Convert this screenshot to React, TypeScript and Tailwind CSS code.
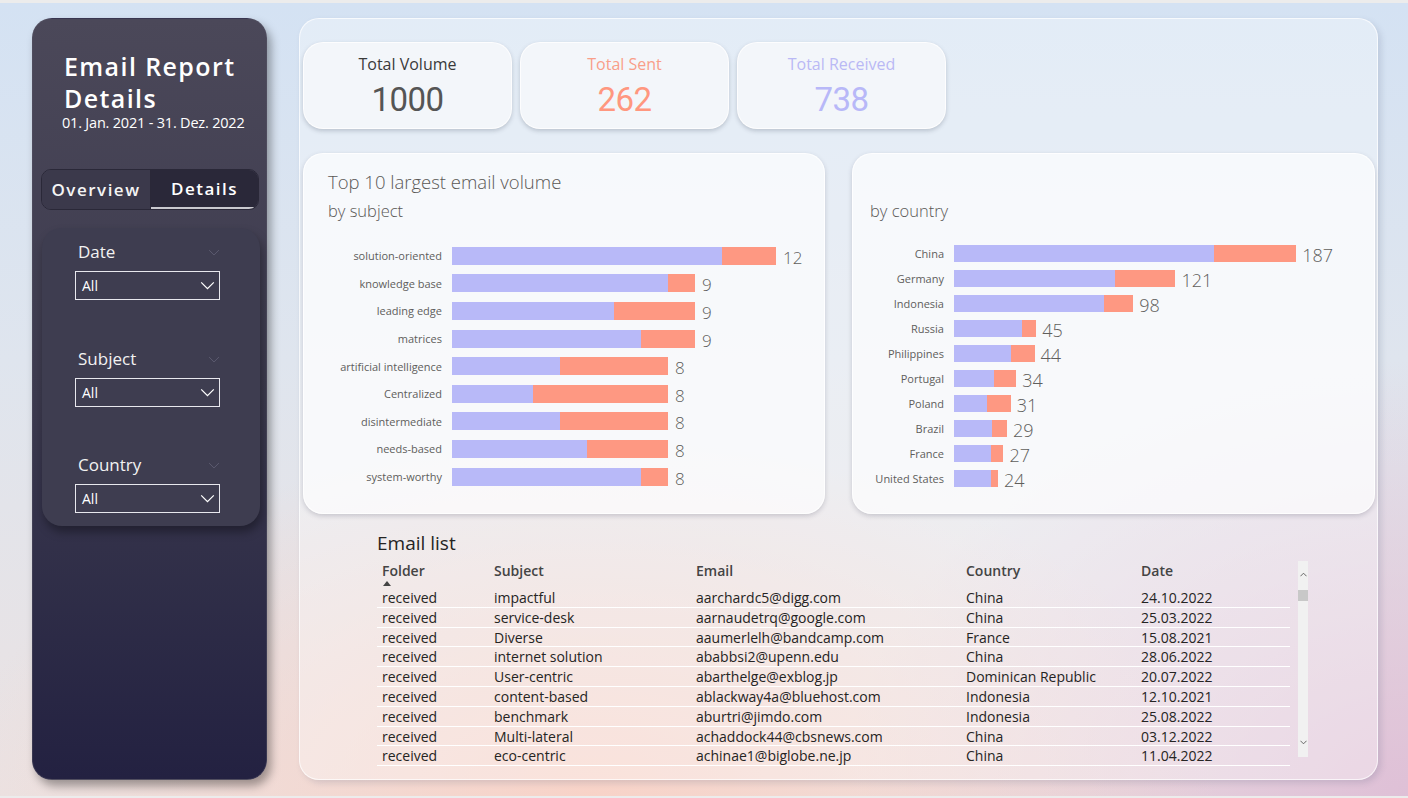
import React from "react";

const subjects: [string, number, number][] = [
  ["solution-oriented", 10, 2],
  ["knowledge base", 8, 1],
  ["leading edge", 6, 3],
  ["matrices", 7, 2],
  ["artificial intelligence", 4, 4],
  ["Centralized", 3, 5],
  ["disintermediate", 4, 4],
  ["needs-based", 5, 3],
  ["system-worthy", 7, 1],
];

const countries: [string, number, number][] = [
  ["China", 142, 45],
  ["Germany", 88, 33],
  ["Indonesia", 82, 16],
  ["Russia", 37, 8],
  ["Philippines", 31, 13],
  ["Portugal", 22, 12],
  ["Poland", 18, 13],
  ["Brazil", 21, 8],
  ["France", 20, 7],
  ["United States", 20, 4],
];

const emails: [string, string, string, string, string][] = [
  ["received", "impactful", "aarchardc5@digg.com", "China", "24.10.2022"],
  ["received", "service-desk", "aarnaudetrq@google.com", "China", "25.03.2022"],
  ["received", "Diverse", "aaumerlelh@bandcamp.com", "France", "15.08.2021"],
  ["received", "internet solution", "ababbsi2@upenn.edu", "China", "28.06.2022"],
  ["received", "User-centric", "abarthelge@exblog.jp", "Dominican Republic", "20.07.2022"],
  ["received", "content-based", "ablackway4a@bluehost.com", "Indonesia", "12.10.2021"],
  ["received", "benchmark", "aburtri@jimdo.com", "Indonesia", "25.08.2022"],
  ["received", "Multi-lateral", "achaddock44@cbsnews.com", "China", "03.12.2022"],
  ["received", "eco-centric", "achinae1@biglobe.ne.jp", "China", "11.04.2022"],
];

const FONT = "font-['Open_Sans','Noto_Sans',sans-serif]";

function Chevron({ className }: { className?: string }) {
  return (
    <svg viewBox="0 0 16 10" className={className} fill="none" stroke="currentColor" strokeWidth="1.4">
      <polyline points="1,1.5 8,8.5 15,1.5" />
    </svg>
  );
}

function Filter({ label, top }: { label: string; top: string }) {
  return (
    <div className={top}>
      <div className="flex items-center justify-between pl-[36px] pr-[40px] h-[22px]">
        <span className="text-[17px] text-[#f2f2f2] leading-[22px]">{label}</span>
        <Chevron className="w-[12px] h-[7px] text-[#5c5b70]" />
      </div>
      <div className="ml-[33px] mt-[8px] w-[145px] h-[29px] border-[1.5px] border-[#e8e8ee] flex items-center justify-between pl-[6px] pr-[4px]">
        <span className="text-[14px] text-white leading-none">All</span>
        <Chevron className="w-[15px] h-[9px] text-white" />
      </div>
    </div>
  );
}

function Kpi({ label, value, lc, vc }: { label: string; value: string; lc: string; vc: string }) {
  return (
    <div className="w-[209px] h-[87px] rounded-[20px] bg-[#f3f6fa] border border-white/80 shadow-[0_2px_4px_rgba(60,70,90,0.25)] flex flex-col items-center">
      <div className={`mt-[10px] text-[16px] leading-[22px] ${lc}`}>{label}</div>
      <div className={`mt-[5px] text-[33px] leading-[40px] font-normal tracking-[-0.5px] font-['Roboto',sans-serif] ${vc}`}>{value}</div>
    </div>
  );
}

export default function App() {
  return (
    <div className={`w-[1408px] h-[798px] bg-[#ececec] pt-[3px] overflow-hidden ${FONT}`}>
      <div className="h-[793px] flex items-start pt-[15px] pl-[32px] bg-[radial-gradient(ellipse_45%_45%_at_42%_100%,rgba(250,208,195,0.85),transparent),radial-gradient(ellipse_40%_55%_at_100%_100%,rgba(222,190,214,0.95),transparent),linear-gradient(180deg,#d4e2f3_0%,#dfe5ee_45%,#ebe2e2_100%)]">
        {/* Sidebar */}
        <div className="w-[235px] h-[762px] rounded-[20px] bg-gradient-to-b from-[#4b4859] via-[#3c3a4e] to-[#232141] shadow-[4px_6px_10px_rgba(0,0,0,0.35)] border border-[#5a586a]/40 flex flex-col">
          <div className="pl-[31px] pt-[31px] text-[25px] leading-[32px] font-semibold tracking-[1.4px] text-white">
            Email Report
            <br />
            Details
          </div>
          <div className="pl-[29px] text-[14.5px] leading-[18px] tracking-[-0.2px] text-white">
            01. Jan. 2021 - 31. Dez. 2022
          </div>
          <div className="ml-[8px] mt-[37px] w-[218px] h-[41px] flex rounded-[10px] overflow-hidden border border-[#2a2838]">
            <div className="w-[109px] h-full bg-[#3b394b] flex items-center justify-center text-[17px] font-semibold tracking-[1.5px] text-[#f4f4f4] border-r border-[#2a2838]">
              Overview
            </div>
            <div className="flex-1 h-full bg-[#2a2839] flex items-center justify-center text-[17px] font-semibold tracking-[1.5px] text-white border-b-[2px] border-[#c9c9cf]">
              Details
            </div>
          </div>
          <div className="ml-[9px] mt-[18px] w-[218px] h-[298px] rounded-[20px] bg-[#3e3d50] shadow-[2px_6px_10px_rgba(0,0,0,0.35)] pt-[13px]">
            <Filter label="Date" top="" />
            <Filter label="Subject" top="mt-[48px]" />
            <Filter label="Country" top="mt-[47px]" />
          </div>
        </div>

        {/* Main panel */}
        <div className="ml-[32px] w-[1079px] h-[762px] rounded-[20px] bg-white/35 border border-white/70 shadow-[3px_3px_6px_rgba(80,90,120,0.18)] pl-[3px] pt-[23px]">
          <div className="flex gap-[8px]">
            <Kpi label="Total Volume" value="1000" lc="text-[#3a3a3a]" vc="text-[#555555]" />
            <Kpi label="Total Sent" value="262" lc="text-[#f99e89]" vc="text-[#ff977f]" />
            <Kpi label="Total Received" value="738" lc="text-[#bab9f5]" vc="text-[#b8b8f8]" />
          </div>

          <div className="flex gap-[27px] mt-[24px]">
            {/* subject chart */}
            <div className="w-[522px] h-[361px] rounded-[20px] bg-white/65 border border-white/80 shadow-[0_2px_5px_rgba(60,60,80,0.22)] pt-[15px]">
              <div className="pl-[24px] text-[18.5px] leading-[26px] text-[#5a5856] font-light">Top 10 largest email volume</div>
              <div className="pl-[24px] mt-[4px] text-[16.5px] leading-[24px] text-[#5a5856] font-light">by subject</div>
              <div className="mt-[19px]">
                {subjects.map(([n, r, s]) => (
                  <div key={n} className="flex items-center h-[27.6px]">
                    <div className="w-[138px] text-right text-[11px] text-[#605e5c] leading-none">{n}</div>
                    <div className="ml-[10px] flex h-[18px]">
                      <div className="bg-[#b8b9f8] h-full" style={{ width: r * 27 }} />
                      <div className="bg-[#fe9882] h-full" style={{ width: s * 27 }} />
                    </div>
                    <div className="ml-[7px] text-[17px] text-[#605e5c] leading-none mt-[3px] font-light">{r + s}</div>
                  </div>
                ))}
              </div>
            </div>
            {/* country chart */}
            <div className="w-[523px] h-[361px] rounded-[20px] bg-white/65 border border-white/80 shadow-[0_2px_5px_rgba(60,60,80,0.22)] pt-[45px]">
              <div className="pl-[17px] text-[16.5px] leading-[24px] text-[#5a5856] font-light">by country</div>
              <div className="mt-[18px]">
                {countries.map(([n, r, s]) => (
                  <div key={n} className="flex items-center h-[25px]">
                    <div className="w-[91px] text-right text-[11px] text-[#605e5c] leading-none">{n}</div>
                    <div className="ml-[10px] flex h-[17px]">
                      <div className="bg-[#b8b9f8] h-full" style={{ width: r * 1.83 }} />
                      <div className="bg-[#fe9882] h-full" style={{ width: s * 1.83 }} />
                    </div>
                    <div className="ml-[6px] text-[18px] text-[#605e5c] leading-none mt-[3px] font-light">{r + s}</div>
                  </div>
                ))}
              </div>
            </div>
          </div>

          {/* Email list */}
          <div className="ml-[74px] mt-[16px]">
            <div className="text-[19px] leading-[26px] text-[#252423]">Email list</div>
            <div className="flex mt-[5px]">
              <div className="w-[913px]">
                <div className="grid grid-cols-[112px_202px_270px_175px_1fr] text-[14px] font-semibold text-[#444] h-[27px]">
                  <div className="pl-[5px] leading-[20px] relative">
                    Folder
                    <div className="absolute left-[6px] top-[20px] w-0 h-0 border-l-[4px] border-r-[4px] border-b-[5px] border-l-transparent border-r-transparent border-b-[#444]" />
                  </div>
                  <div className="pl-[5px] leading-[20px]">Subject</div>
                  <div className="pl-[5px] leading-[20px]">Email</div>
                  <div className="pl-[5px] leading-[20px]">Country</div>
                  <div className="pl-[5px] leading-[20px]">Date</div>
                </div>
                {emails.map((row, i) => (
                  <div key={i} className="grid grid-cols-[112px_202px_270px_175px_1fr] text-[14px] text-[#252423] h-[19.8px] border-b border-white">
                    {row.map((c, j) => (
                      <div key={j} className="pl-[5px] leading-[20px] whitespace-nowrap">{c}</div>
                    ))}
                  </div>
                ))}
              </div>
              <div className="ml-[8px] w-[10px] h-[196px] bg-[#f1f1f1] flex flex-col items-center">
                <svg viewBox="0 0 8 5" className="w-[7px] h-[5px] mt-[11px] text-[#555]" fill="none" stroke="currentColor" strokeWidth="1">
                  <polyline points="0.5,4.5 4,1 7.5,4.5" />
                </svg>
                <div className="w-[10px] h-[11px] bg-[#c8c8c8] mt-[13px]" />
                <div className="flex-1" />
                <svg viewBox="0 0 8 5" className="w-[7px] h-[5px] mb-[12px] text-[#555]" fill="none" stroke="currentColor" strokeWidth="1">
                  <polyline points="0.5,0.5 4,4 7.5,0.5" />
                </svg>
              </div>
            </div>
          </div>
        </div>
      </div>
    </div>
  );
}
